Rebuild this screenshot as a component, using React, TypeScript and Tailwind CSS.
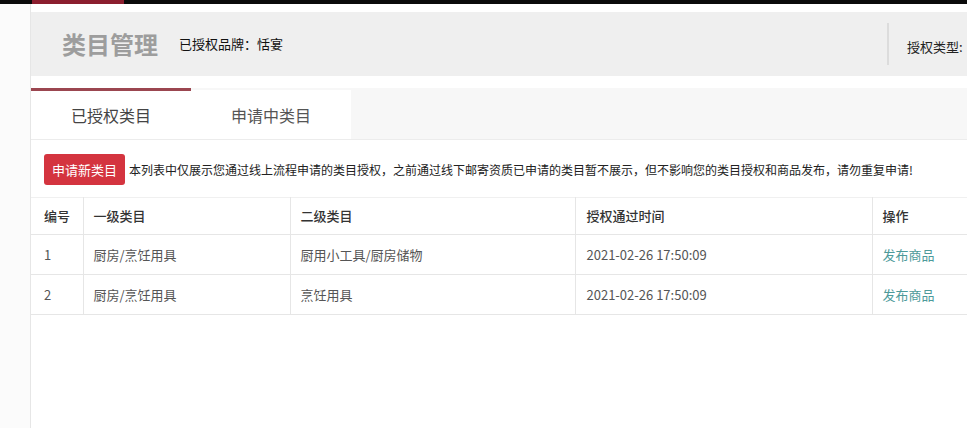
import React from 'react'

const rows = [
  { id: '1', first: '厨房/烹饪用具', second: '厨用小工具/厨房储物', time: '2021-02-26 17:50:09' },
  { id: '2', first: '厨房/烹饪用具', second: '烹饪用具', time: '2021-02-26 17:50:09' },
]

const font = { fontFamily: '"Noto Sans CJK SC", "Noto Sans", sans-serif' }

const App = () => {
  return (
    <div className="w-[967px] h-[428px] overflow-hidden bg-white flex flex-col" style={font}>
      {/* top strip */}
      <div className="h-[4px] bg-[#0a0a0a] flex shrink-0">
        <div className="ml-[32px] w-[92px] bg-[#8b1e2e]" />
      </div>

      <div className="flex flex-1 min-h-0">
        <div className="w-[31px] shrink-0 bg-[#fbfbfb] border-r border-[#e6e6e6]" />

        <div className="flex-1 min-w-0 flex flex-col pt-[8px]">
          {/* header */}
          <div className="h-[64px] bg-[#efefef] flex items-center pl-[31px] shrink-0">
            <h1 className="text-[24px] font-bold text-[#9d9d9d] leading-none">类目管理</h1>
            <span className="ml-[21px] text-[13px] text-[#111]">已授权品牌：恬宴</span>
            <div className="ml-auto w-[80px] shrink-0 flex items-center">
              <div className="h-[42px] border-l-2 border-[#dcdcdc]" />
              <span className="ml-[18px] mt-[6px] text-[13px] text-[#222] whitespace-nowrap">授权类型:</span>
            </div>
          </div>

          {/* tabs */}
          <div className="mt-[12px] h-[52px] flex bg-[#f7f7f7] border-b border-[#ececec] shrink-0">
            <div className="w-[160px] bg-white border-t-[3px] border-[#9b4650] flex items-center justify-center text-[16px] text-[#444]">
              已授权类目
            </div>
            <div className="w-[160px] bg-white mt-[2px] flex items-center justify-center text-[16px] text-[#555]">
              申请中类目
            </div>
          </div>

          {/* notice */}
          <div className="flex items-center pl-[13px] pt-[14px] pb-[12px]">
            <button className="h-[31px] w-[81px] rounded-[3px] bg-[#d4343f] text-white text-[13px]">申请新类目</button>
            <span className="ml-[4px] text-[12px] text-[#222] whitespace-nowrap">
              本列表中仅展示您通过线上流程申请的类目授权，之前通过线下邮寄资质已申请的类目暂不展示，但不影响您的类目授权和商品发布，请勿重复申请!
            </span>
          </div>

          {/* table */}
          <table className="w-[960px] border-collapse text-[13px] text-[#555] table-fixed border-t border-[#f0f0f0]">
            <colgroup>
              <col className="w-[52px]" />
              <col className="w-[207px]" />
              <col className="w-[285px]" />
              <col className="w-[297px]" />
              <col />
            </colgroup>
            <thead>
              <tr className="h-[37px] text-[#333] text-left">
                <th className="pl-[13px] font-medium border-b border-[#e6e6e6]">编号</th>
                <th className="pl-[10px] font-medium border-b border-l border-[#e6e6e6]">一级类目</th>
                <th className="pl-[10px] font-medium border-b border-l border-[#e6e6e6]">二级类目</th>
                <th className="pl-[11px] font-medium border-b border-l border-[#e6e6e6]">授权通过时间</th>
                <th className="pl-[10px] font-medium border-b border-l border-[#e6e6e6]">操作</th>
              </tr>
            </thead>
            <tbody>
              {rows.map((r) => (
                <tr key={r.id} className="h-[40px]">
                  <td className="pl-[13px] border-b border-[#e6e6e6]">{r.id}</td>
                  <td className="pl-[10px] border-b border-l border-[#e6e6e6]">{r.first}</td>
                  <td className="pl-[10px] border-b border-l border-[#e6e6e6]">{r.second}</td>
                  <td className="pl-[11px] border-b border-l border-[#e6e6e6]">{r.time}</td>
                  <td className="pl-[10px] border-b border-l border-[#e6e6e6] text-[#4d9a9a]">发布商品</td>
                </tr>
              ))}
            </tbody>
          </table>
        </div>
      </div>
    </div>
  )
}

export default App
